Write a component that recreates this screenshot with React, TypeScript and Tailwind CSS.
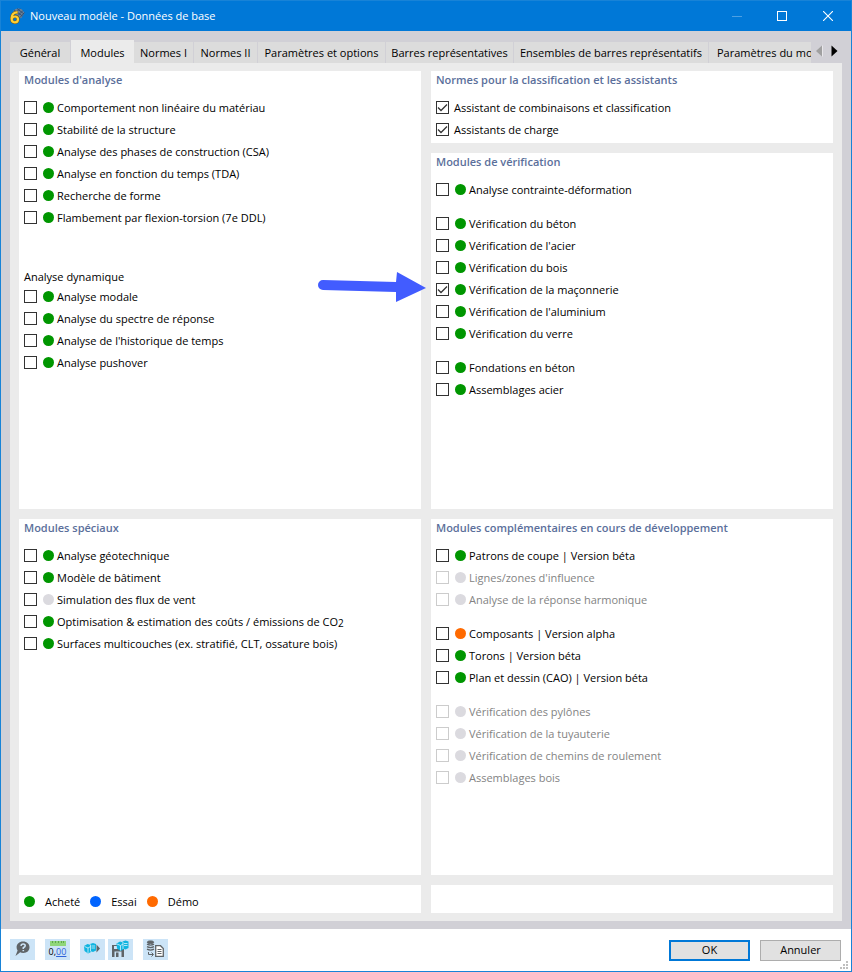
import type { ReactNode } from 'react';

type Status = 'bought' | 'trial' | 'demo' | 'none';

interface Module {
  id: string;
  label: ReactNode;
  status?: Status;
  checked?: boolean;
  disabled?: boolean;
  pointed?: boolean;
}

const TABS = [
  { label: 'Général', width: 'w-[61px]' },
  { label: 'Modules', width: 'w-[63px]', active: true },
  { label: 'Normes I', width: 'w-[60px]' },
  { label: 'Normes II', width: 'w-[64px]' },
  { label: 'Paramètres et options', width: 'w-[128px]' },
  { label: 'Barres représentatives', width: 'w-[128px]' },
  { label: 'Ensembles de barres représentatifs', width: 'w-[195px]' },
];

const ANALYSIS: Module[] = [
  { id: 'nonlinear', label: 'Comportement non linéaire du matériau', status: 'bought' },
  { id: 'stability', label: 'Stabilité de la structure', status: 'bought' },
  { id: 'csa', label: 'Analyse des phases de construction (CSA)', status: 'bought' },
  { id: 'tda', label: 'Analyse en fonction du temps (TDA)', status: 'bought' },
  { id: 'form', label: 'Recherche de forme', status: 'bought' },
  { id: 'torsion', label: 'Flambement par flexion-torsion (7e DDL)', status: 'bought' },
];

const DYNAMIC: Module[] = [
  { id: 'modal', label: 'Analyse modale', status: 'bought' },
  { id: 'spectrum', label: 'Analyse du spectre de réponse', status: 'bought' },
  { id: 'history', label: "Analyse de l'historique de temps", status: 'bought' },
  { id: 'pushover', label: 'Analyse pushover', status: 'bought' },
];

const ASSISTANTS: Module[] = [
  { id: 'combinations', label: 'Assistant de combinaisons et classification', checked: true },
  { id: 'loads', label: 'Assistants de charge', checked: true },
];

const DESIGN: Module[][] = [
  [{ id: 'stress', label: 'Analyse contrainte-déformation', status: 'bought' }],
  [
    { id: 'concrete', label: 'Vérification du béton', status: 'bought' },
    { id: 'steel', label: "Vérification de l'acier", status: 'bought' },
    { id: 'timber', label: 'Vérification du bois', status: 'bought' },
    { id: 'masonry', label: 'Vérification de la maçonnerie', status: 'bought', checked: true, pointed: true },
    { id: 'aluminum', label: "Vérification de l'aluminium", status: 'bought' },
    { id: 'glass', label: 'Vérification du verre', status: 'bought' },
  ],
  [
    { id: 'foundations', label: 'Fondations en béton', status: 'bought' },
    { id: 'joints', label: 'Assemblages acier', status: 'bought' },
  ],
];

const SPECIAL: Module[] = [
  { id: 'geotech', label: 'Analyse géotechnique', status: 'bought' },
  { id: 'building', label: 'Modèle de bâtiment', status: 'bought' },
  { id: 'wind', label: 'Simulation des flux de vent', status: 'none' },
  {
    id: 'cost',
    label: (
      <>
        Optimisation &amp; estimation des coûts / émissions de CO<sub className="bottom-[-1px] text-[10px]">2</sub>
      </>
    ),
    status: 'bought',
  },
  { id: 'surfaces', label: 'Surfaces multicouches (ex. stratifié, CLT, ossature bois)', status: 'bought' },
];

const UPCOMING: Module[][] = [
  [
    { id: 'patterns', label: 'Patrons de coupe | Version béta', status: 'bought' },
    { id: 'influence', label: "Lignes/zones d'influence", status: 'none', disabled: true },
    { id: 'harmonic', label: 'Analyse de la réponse harmonique', status: 'none', disabled: true },
  ],
  [
    { id: 'components', label: 'Composants | Version alpha', status: 'demo' },
    { id: 'strands', label: 'Torons | Version béta', status: 'bought' },
    { id: 'cad', label: 'Plan et dessin (CAO) | Version béta', status: 'bought' },
  ],
  [
    { id: 'towers', label: 'Vérification des pylônes', status: 'none', disabled: true },
    { id: 'piping', label: 'Vérification de la tuyauterie', status: 'none', disabled: true },
    { id: 'crane', label: 'Vérification de chemins de roulement', status: 'none', disabled: true },
    { id: 'woodjoints', label: 'Assemblages bois', status: 'none', disabled: true },
  ],
];

const DOT_COLORS: Record<Status, string> = {
  bought: 'bg-[#009600]',
  trial: 'bg-[#0064ff]',
  demo: 'bg-[#ff6a00]',
  none: 'bg-[#dbdadf]',
};

function Dot({ status }: { status: Status }) {
  return <span className={`mb-px size-[11px] shrink-0 rounded-full ${DOT_COLORS[status]}`} />;
}

function PointerArrow() {
  return (
    <svg
      className="pointer-events-none absolute right-full -bottom-px mr-[10px] h-[30px] w-[108px]"
      viewBox="0 0 108 30"
      fill="#425cff"
      aria-hidden="true"
    >
      <path d="M5 8 L78 10 L79 0 L108 16 L78 30 L78 20 L5 18 A5 5 0 0 1 5 8 Z" />
    </svg>
  );
}

function ModuleRow({ module }: { module: Module }) {
  const { id, label, status, checked, disabled, pointed } = module;
  return (
    <div className="relative flex h-[22px] items-center">
      {pointed && <PointerArrow />}
      <span className="grid pb-px">
        <input
          id={id}
          type="checkbox"
          defaultChecked={checked}
          disabled={disabled}
          className="peer col-start-1 row-start-1 size-[13px] appearance-none border border-[#333] bg-white disabled:border-[#ccc]"
        />
        <svg
          className="pointer-events-none invisible col-start-1 row-start-1 size-[13px] peer-checked:visible"
          viewBox="0 0 13 13"
          fill="none"
          stroke="#333"
          strokeWidth="1.3"
          aria-hidden="true"
        >
          <path d="M2 6.5 L5 9.5 L11 3.5" />
        </svg>
      </span>
      <label
        htmlFor={id}
        className={`flex items-center gap-[3px] whitespace-nowrap ${status ? 'pl-[6px]' : 'pl-[5px]'} ${disabled ? 'text-[#838383]' : 'text-black'}`}
      >
        {status && <Dot status={status} />}
        <span>{label}</span>
      </label>
    </div>
  );
}

function ModuleList({ modules }: { modules: Module[] }) {
  return (
    <div>
      {modules.map((module) => (
        <ModuleRow key={module.id} module={module} />
      ))}
    </div>
  );
}

function Card({ title, className = '', children }: { title: string; className?: string; children: ReactNode }) {
  return (
    <section className={`bg-white px-[5px] ${className}`}>
      <h2 className="mb-2 font-semibold text-[#5b6f9b]">{title}</h2>
      {children}
    </section>
  );
}

function AppLogo() {
  return (
    <svg className="size-4" viewBox="0 0 16 16" aria-hidden="true">
      <path d="M4 3 Q8 -1 13 1.5 L15.5 5 L12 10.5 L8 7 Z" fill="#6f8296" />
      <path d="M5 2 L13.5 8 M8 0.5 L15 6 M6.5 5 L11 0.5 M9 7.5 L14 2.5 M11 9.5 L15.5 4.5" stroke="#2a4a70" strokeWidth="0.8" />
      <path
        d="M8.6 4.4 C5 4 2.6 6.6 2.6 10.2 C2.6 12.9 3.8 14.3 5.8 14.3 C7.7 14.3 9 13.1 9 11.2 C9 9.5 7.9 8.5 6.2 8.5 C4.8 8.5 3.6 9.2 2.9 10.4"
        fill="none"
        stroke="#7a5a10"
        strokeWidth="3.2"
      />
      <path
        d="M8.6 4.4 C5 4 2.6 6.6 2.6 10.2 C2.6 12.9 3.8 14.3 5.8 14.3 C7.7 14.3 9 13.1 9 11.2 C9 9.5 7.9 8.5 6.2 8.5 C4.8 8.5 3.6 9.2 2.9 10.4"
        fill="none"
        stroke="#ffcf33"
        strokeWidth="2.2"
      />
    </svg>
  );
}

function HelpIcon() {
  return (
    <svg className="size-[21px]" viewBox="0 0 21 21" aria-hidden="true">
      <path d="M11 2.5 C15 2.5 17.5 5 17.5 8.3 C17.5 11.8 15 14 11.3 14 C10 14 9 13.7 8.2 13.3 L3.5 17 L5.6 11.4 C4.9 10.5 4.6 9.4 4.6 8.3 C4.6 5 7.2 2.5 11 2.5 Z" fill="#5f6468" />
      <path d="M9 6.9 Q9.2 5 11.2 5 Q13.2 5 13.2 6.8 Q13.2 7.9 11.3 8.8 V10 M11.3 10.9 V12.3" fill="none" stroke="#cce4f7" strokeWidth="1.6" />
    </svg>
  );
}

function UnitsIcon() {
  return (
    <span className="flex flex-col items-center">
      <svg className="h-[5px] w-4" viewBox="0 0 16 5" aria-hidden="true">
        <rect width="16" height="5" fill="#8fd67a" />
        <path d="M2.5 0 V2 M5.5 0 V2 M8.5 0 V2 M11.5 0 V2 M13.5 0 V2" stroke="#5fa84d" />
      </svg>
      <span className="text-[9px] leading-3 text-black">
        0,<span className="text-[#2f62d9] underline">00</span>
      </span>
    </span>
  );
}

// cube with a smaller box in front of its right side
function CubeShape() {
  return (
    <>
      <path d="M0 3 L3.5 1 L7 2 V9 L4 10.5 L0.5 8 Z" fill="#10b4e0" />
      <path d="M6 1 L9 0 L12 1 V7.5 L9 9 L6 8 Z" fill="#10b4e0" />
      <path d="M0.5 3.5 L4 5 L6.5 3.5 M4 5 V10 M6.5 1.5 V8.5 M7.5 3 H11 M7.5 5 H11" fill="none" stroke="#d8f3fb" strokeWidth="0.8" />
    </>
  );
}

function ModelIcon() {
  return (
    <svg className="size-[21px]" viewBox="0 0 21 21" aria-hidden="true">
      <g transform="translate(2 4)">
        <CubeShape />
      </g>
      <path d="M14.5 5.5 L18 9.5 L14.5 13.5 Z" fill="#5f6468" />
    </svg>
  );
}

function SaveModelIcon() {
  return (
    <svg className="size-[21px]" viewBox="0 0 21 21" aria-hidden="true">
      <path d="M2 6 H12 L14 8 V18 H2 Z" fill="#5f6468" />
      <path d="M4.5 12.5 H11.5 V18 H4.5 Z M4 7 H8 V10 H4 Z" fill="#cce4f7" />
      <path d="M6 13.5 H8.5 V18 H6 Z" fill="#5f6468" />
      <g transform="translate(6.5 1.5)">
        <CubeShape />
      </g>
    </svg>
  );
}

function DatabaseIcon() {
  return (
    <svg className="size-[21px]" viewBox="0 0 21 21" fill="none" stroke="#5f6468" aria-hidden="true">
      <ellipse cx="5.5" cy="3.2" rx="3.2" ry="1.3" fill="#5f6468" />
      <path d="M2 5.2 Q5.5 7 9 5.2 M2 7.7 Q5.5 9.5 9 7.7 M2 10.2 Q5.5 12 9 10.2" strokeWidth="1.4" />
      <path d="M3.5 13 V15.5 H8 M6.5 13.5 L8.5 15.5 L6.5 17.5" />
      <path d="M10.7 6.7 H15.5 L18.3 9.5 V17.3 H10.7 Z" fill="#fff" strokeWidth="1.3" />
      <path d="M12.5 10.5 H16.5 M12.5 12.5 H16.5 M12.5 14.5 H16.5" />
    </svg>
  );
}

function ToolButton({ label, children }: { label: string; children: ReactNode }) {
  return (
    <button type="button" aria-label={label} className="flex h-[21px] w-[25px] items-center justify-center bg-[#cce4f7]">
      {children}
    </button>
  );
}

function TitleBar() {
  return (
    <header className="flex h-[30px] items-center bg-[#0078d7] pl-2 text-white">
      <AppLogo />
      <h1 className="flex-1 pl-[5px]">Nouveau modèle - Données de base</h1>
      <button type="button" aria-label="Réduire" disabled className="flex h-full w-[45px] items-center justify-center">
        <svg className="size-[10px]" viewBox="0 0 10 10" stroke="#4da0e3">
          <path d="M0 5.5 H10" />
        </svg>
      </button>
      <button type="button" aria-label="Agrandir" className="flex h-full w-[46px] items-center justify-center">
        <svg className="size-[10px]" viewBox="0 0 10 10" fill="none" stroke="#fff">
          <rect x="0.5" y="0.5" width="9" height="9" />
        </svg>
      </button>
      <button type="button" aria-label="Fermer" className="flex h-full w-[46px] items-center justify-center">
        <svg className="size-[10px]" viewBox="0 0 10 10" stroke="#fff" strokeWidth="1.1">
          <path d="M0 0 L10 10 M10 0 L0 10" />
        </svg>
      </button>
    </header>
  );
}

function TabBar() {
  return (
    <div className="flex h-[23px] items-end">
      <div role="tablist" className="flex min-w-0 flex-1 items-end overflow-hidden">
        {TABS.map((tab) => (
          <button
            key={tab.label}
            type="button"
            role="tab"
            aria-selected={Boolean(tab.active)}
            className={`shrink-0 whitespace-nowrap ${tab.width} ${
              tab.active ? 'h-[23px] bg-[#ebebeb] pt-[2px]' : 'h-[21px] border-r border-[#d1d0d6] bg-[#dcdcdc]'
            }`}
          >
            {tab.label}
          </button>
        ))}
        <button
          type="button"
          role="tab"
          aria-selected={false}
          className="h-[21px] min-w-0 flex-1 overflow-hidden bg-[#dcdcdc] pl-2 text-left whitespace-nowrap"
        >
          Paramètres du modèle
        </button>
      </div>
      <div className="flex h-[21px] w-[31px] items-center gap-2 pb-1 pl-[5px]">
        <button type="button" aria-label="Onglets précédents" disabled>
          <svg className="block h-3 w-[7px]" viewBox="0 0 7 12">
            <path d="M7 0.5 V11.5" stroke="#fff" />
            <path d="M6 0.5 V11.5 L0 6 Z" fill="#a0a0a0" />
          </svg>
        </button>
        <button type="button" aria-label="Onglets suivants">
          <svg className="block h-3 w-[7px]" viewBox="0 0 7 12">
            <path d="M0.5 0.5 V11.5 L6.5 6 Z" fill="#000" />
          </svg>
        </button>
      </div>
    </div>
  );
}

function Legend() {
  return (
    <div className="flex items-center gap-[10px] bg-white px-[5px] pt-2 pb-[2px]">
      <Dot status="bought" />
      <span>Acheté</span>
      <Dot status="trial" />
      <span>Essai</span>
      <Dot status="demo" />
      <span>Démo</span>
    </div>
  );
}

export default function App() {
  return (
    <div className="flex min-h-screen flex-col border border-[#1883d7] bg-white font-['Open_Sans','Noto_Sans',sans-serif] text-[11px] leading-[18px] text-black">
      <TitleBar />
      <main className="flex flex-1 flex-col bg-[#d1d0d6] px-[9px] pt-[9px] pb-2">
        <TabBar />
        <div className="grid flex-1 grid-cols-2 grid-rows-[438fr_356fr_28px] gap-[10px] bg-[#ebebeb] px-[9px] py-2">
          <Card title="Modules d'analyse">
            <ModuleList modules={ANALYSIS} />
            <h3 className="mt-[39px]">Analyse dynamique</h3>
            <ModuleList modules={DYNAMIC} />
          </Card>
          <div className="flex flex-col gap-[10px]">
            <Card title="Normes pour la classification et les assistants" className="pb-[2px]">
              <ModuleList modules={ASSISTANTS} />
            </Card>
            <Card title="Modules de vérification" className="flex-1">
              <div className="flex flex-col gap-3">
                {DESIGN.map((group) => (
                  <ModuleList key={group[0].id} modules={group} />
                ))}
              </div>
            </Card>
          </div>
          <Card title="Modules spéciaux">
            <ModuleList modules={SPECIAL} />
          </Card>
          <Card title="Modules complémentaires en cours de développement">
            <div className="flex flex-col gap-3">
              {UPCOMING.map((group) => (
                <ModuleList key={group[0].id} modules={group} />
              ))}
            </div>
          </Card>
          <Legend />
          <div className="bg-white" />
        </div>
      </main>
      <footer className="relative flex h-[42px] items-center justify-between pr-[10px] pl-[9px]">
        <div className="flex gap-[10px] pb-px">
          <ToolButton label="Aide">
            <HelpIcon />
          </ToolButton>
          <ToolButton label="Unités et décimales">
            <UnitsIcon />
          </ToolButton>
          <div className="flex gap-[3px]">
            <ToolButton label="Charger le modèle">
              <ModelIcon />
            </ToolButton>
            <ToolButton label="Enregistrer comme modèle">
              <SaveModelIcon />
            </ToolButton>
          </div>
          <ToolButton label="Copier les données">
            <DatabaseIcon />
          </ToolButton>
        </div>
        <div className="flex gap-[10px]">
          <button type="button" className="h-[21px] w-[81px] border-2 border-[#0078d7] bg-[#e1e1e1] leading-4">
            OK
          </button>
          <button type="button" className="h-[21px] w-[81px] border border-[#adadad] bg-[#e1e1e1] leading-4">
            Annuler
          </button>
        </div>
        <svg className="absolute right-[2px] bottom-[1px] size-[9px]" viewBox="0 0 9 9" fill="#bfbfbf" aria-hidden="true">
          <path d="M6 0h2v2h-2z M3 3h2v2h-2z M6 3h2v2h-2z M0 6h2v2h-2z M3 6h2v2h-2z M6 6h2v2h-2z" />
        </svg>
      </footer>
    </div>
  );
}
